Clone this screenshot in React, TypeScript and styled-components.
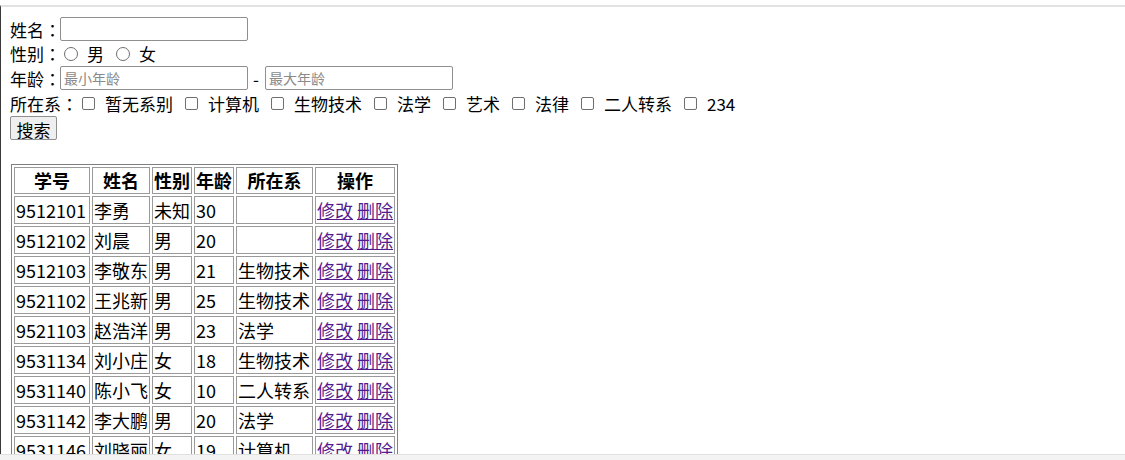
import React from 'react';
import styled, { createGlobalStyle } from 'styled-components';

const GlobalStyle = createGlobalStyle`
  html, body {
    margin: 0;
    padding: 0;
    background: #fff;
    overflow: hidden;
  }
  body {
    font-family: "Noto Sans CJK SC", "Noto Sans", sans-serif;
    color: #000;
  }
`;

const Page = styled.div`
  width: 1125px;
  height: 460px;
  display: flex;
  flex-direction: column;
  padding-top: 5px;
  box-sizing: border-box;
`;

const Frame = styled.div`
  flex: 1;
  border-top: 2px solid #e2e2e2;
  border-left: 1px solid #3a3a3a;
  padding: 10px 0 0 9px;
  overflow: hidden;
`;

const BottomStrip = styled.div`
  height: 5px;
  background: #f3f3f3;
  border-top: 1px solid #e0e0e0;
`;

const Form = styled.form`
  display: flex;
  flex-direction: column;
  font-size: 17px;
`;

const Row = styled.div`
  height: 24.6px;
  display: flex;
  align-items: center;
  white-space: nowrap;
`;

const Colon = styled.span`
  font-family: "Noto Sans CJK JP", "Noto Sans CJK SC", sans-serif;
  margin-right: -1px;
`;

const TextInput = styled.input`
  width: 188px;
  height: 24px;
  box-sizing: border-box;
  border: 1px solid #8f8f8f;
  border-radius: 2px;
  padding: 0 3px;
  font-family: "Noto Sans CJK SC", sans-serif;
  font-size: 14px;
  margin: 0;
  &::placeholder {
    color: #8a8a8a;
  }
`;

const Dash = styled.span`
  margin: 0 6px 0 5px;
`;

const Radio = styled.input.attrs({ type: 'radio' })<{ $first?: boolean }>`
  appearance: none;
  width: 14px;
  height: 14px;
  box-sizing: border-box;
  border: 1px solid #6f6f6f;
  border-radius: 50%;
  margin: 0 9px 0 ${(p) => (p.$first ? '4px' : '12px')};
`;

const Check = styled.input.attrs({ type: 'checkbox' })<{ $first?: boolean }>`
  appearance: none;
  width: 13px;
  height: 13px;
  box-sizing: border-box;
  border: 1px solid #6f6f6f;
  border-radius: 2px;
  margin: 0 10px 0 ${(p) => (p.$first ? '5px' : '12px')};
`;

const Button = styled.button`
  width: 47px;
  height: 24px;
  box-sizing: border-box;
  border: 1px solid #8f8f8f;
  border-radius: 2px;
  background: #efefef;
  font-family: "Noto Sans CJK SC", sans-serif;
  font-size: 17px;
  padding: 0;
  color: #000;
`;

const Table = styled.table`
  margin: 24px 0 0 1px;
  border: 1px solid #808080;
  border-spacing: 2px;
  table-layout: fixed;
  font-size: 18px;
`;

const Th = styled.th<{ $w: number }>`
  width: ${(p) => p.$w - 4}px;
  border: 1px solid #9a9a9a;
  padding: 1px;
  line-height: 23px;
  font-weight: bold;
  text-align: center;
  white-space: nowrap;
  overflow: hidden;
`;

const Td = styled.td`
  border: 1px solid #9a9a9a;
  padding: 1px;
  line-height: 24px;
  height: 24px;
  white-space: nowrap;
  overflow: hidden;
`;

const Link = styled.a`
  color: #551a8b;
  text-decoration: underline;
`;

const depts = ['暂无系别', '计算机', '生物技术', '法学', '艺术', '法律', '二人转系', '234'];

const cols: [string, number][] = [
  ['学号', 76],
  ['姓名', 58],
  ['性别', 40],
  ['年龄', 39],
  ['所在系', 77],
  ['操作', 79],
];

const students = [
  ['9512101', '李勇', '未知', '30', ''],
  ['9512102', '刘晨', '男', '20', ''],
  ['9512103', '李敬东', '男', '21', '生物技术'],
  ['9521102', '王兆新', '男', '25', '生物技术'],
  ['9521103', '赵浩洋', '男', '23', '法学'],
  ['9531134', '刘小庄', '女', '18', '生物技术'],
  ['9531140', '陈小飞', '女', '10', '二人转系'],
  ['9531142', '李大鹏', '男', '20', '法学'],
  ['9531146', '刘晓丽', '女', '19', '计算机'],
  ['9531150', '王敏', '女', '20', '计算机'],
];

const App: React.FC = () => {
  return (
    <Page>
      <GlobalStyle />
      <Frame>
        <Form onSubmit={(e) => e.preventDefault()}>
          <Row>
            姓名<Colon>：</Colon>
            <TextInput type="text" />
          </Row>
          <Row>
            性别<Colon>：</Colon>
            <Radio name="sex" $first />男<Radio name="sex" />女
          </Row>
          <Row>
            年龄<Colon>：</Colon>
            <TextInput type="text" placeholder="最小年龄" />
            <Dash>-</Dash>
            <TextInput type="text" placeholder="最大年龄" />
          </Row>
          <Row>
            所在系<Colon>：</Colon>
            {depts.map((d, i) => (
              <React.Fragment key={d}>
                <Check $first={i === 0} />
                {d}
              </React.Fragment>
            ))}
          </Row>
          <Row>
            <Button type="submit">搜索</Button>
          </Row>
        </Form>

        <Table>
          <thead>
            <tr>
              {cols.map(([name, w]) => (
                <Th key={name} $w={w}>
                  {name}
                </Th>
              ))}
            </tr>
          </thead>
          <tbody>
            {students.map((s) => (
              <tr key={s[0]}>
                {s.map((v, i) => (
                  <Td key={i}>{v}</Td>
                ))}
                <Td>
                  <Link href="#">修改</Link> <Link href="#">删除</Link>
                </Td>
              </tr>
            ))}
          </tbody>
        </Table>
      </Frame>
      <BottomStrip />
    </Page>
  );
};

export default App;
